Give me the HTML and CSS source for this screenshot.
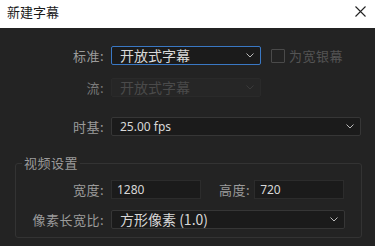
FILE: index.html
```html
<!DOCTYPE html>
<html lang="zh">
<head>
    <meta charset="UTF-8">
    <title>新建字幕</title>
    <link rel="stylesheet" href="styles.css">
</head>
<body>
    <div class="titlebar">
        <span class="title">新建字幕</span>
        <span class="close">
            <svg width="11" height="11" viewBox="0 0 11 11"><path d="M0.5 0.5 L10.5 10.5 M10.5 0.5 L0.5 10.5" stroke="#222" stroke-width="1.1" fill="none"/></svg>
        </span>
    </div>

    <div class="content">
        <div class="row row-std">
            <label class="lbl">标准:</label>
            <div class="select select-std focus">
                <span class="val big">开放式字幕</span>
                <svg class="arrow" width="8" height="5" viewBox="0 0 8 5"><path d="M0.5 0.5 L4 4 L7.5 0.5" stroke="#bbb" fill="none"/></svg>
            </div>
            <div class="check">
                <span class="box"></span>
                <span class="check-text">为宽银幕</span>
            </div>
        </div>

        <div class="row row-stream">
            <label class="lbl dim">流:</label>
            <div class="select select-std disabled">
                <span class="val big">开放式字幕</span>
                <svg class="arrow" width="8" height="5" viewBox="0 0 8 5"><path d="M0.5 0.5 L4 4 L7.5 0.5" stroke="#3a3a3a" fill="none"/></svg>
            </div>
        </div>

        <div class="row row-time">
            <label class="lbl">时基:</label>
            <div class="select select-wide">
                <span class="val">25.00 fps</span>
                <svg class="arrow" width="8" height="5" viewBox="0 0 8 5"><path d="M0.5 0.5 L4 4 L7.5 0.5" stroke="#bbb" fill="none"/></svg>
            </div>
        </div>

        <fieldset class="group">
            <legend>视频设置</legend>
            <div class="row row-size">
                <label class="lbl lbl-in">宽度:</label>
                <div class="input">1280</div>
                <label class="lbl lbl-h">高度:</label>
                <div class="input">720</div>
            </div>
            <div class="row row-par">
                <label class="lbl lbl-in">像素长宽比:</label>
                <div class="select select-par">
                    <span class="val big">方形像素 (1.0)</span>
                    <svg class="arrow" width="8" height="5" viewBox="0 0 8 5"><path d="M0.5 0.5 L4 4 L7.5 0.5" stroke="#bbb" fill="none"/></svg>
                </div>
            </div>
        </fieldset>
    </div>
</body>
</html>
```

FILE: styles.css
```css
body {
    margin: 0;
    background-color: #232323;
    font-family: "Noto Sans CJK SC", "Noto Sans", sans-serif;
    font-size: 13px;
    width: 375px;
    height: 246px;
    overflow: hidden;
}

.titlebar {
    height: 28px;
    background-color: #ffffff;
    display: flex;
    align-items: center;
    justify-content: space-between;
    padding: 0 9px 0 7px;
    box-sizing: border-box;
}

.title {
    color: #1a1a1a;
    font-size: 13px;
    line-height: 16px;
    margin-top: -4px;
}

.close {
    display: flex;
    margin-top: -5px;
}

.content {
    padding-top: 18px;
}

.row {
    display: flex;
    align-items: center;
}

.lbl {
    width: 104px;
    text-align: right;
    color: #9b9b9b;
    font-size: 13px;
    letter-spacing: 0.5px;
    margin-right: 7px;
    flex-shrink: 0;
}

.lbl.dim {
    color: #7a7a7a;
}

.select {
    height: 19px;
    box-sizing: border-box;
    background-color: #1b1b1b;
    border: 1px solid #363636;
    border-radius: 2px;
    display: flex;
    align-items: center;
    justify-content: space-between;
    padding: 0 6px 0 8px;
    color: #d8d8d8;
}

.select.focus {
    border-color: #3a78c4;
}

.select.disabled {
    background-color: #262626;
    border-color: #2a2a2a;
    color: #4a4a4a;
}

.val {
    font-family: "Noto Sans", "Noto Sans CJK SC", sans-serif;
    font-size: 12px;
    line-height: 17px;
}

.val.big {
    font-family: "Noto Sans CJK SC", sans-serif;
    font-size: 14px;
}

.select-std {
    width: 150px;
}

.select-wide {
    width: 250px;
}

.select-par {
    width: 234px;
}

.check {
    display: flex;
    align-items: center;
    margin-left: 10px;
}

.box {
    width: 12px;
    height: 12px;
    border: 1px solid #4a4a4a;
    border-radius: 1px;
    margin-right: 4px;
}

.check-text {
    color: #545454;
    font-size: 13px;
    letter-spacing: 0.5px;
}

.row-stream {
    margin-top: 13px;
}

.row-time {
    margin-top: 20px;
}

.group {
    margin: 20px 13px 0 15px;
    padding: 0 0 14px 0;
    border: 1px solid #333333;
    border-radius: 3px;
    height: 82px;
    box-sizing: border-box;
}

.group legend {
    color: #9b9b9b;
    font-size: 13px;
    letter-spacing: 0.5px;
    padding: 0 2px;
    margin-left: 6px;
    line-height: 14px;
}

.lbl-in {
    width: 88px;
}

.lbl-h {
    width: auto;
    margin-left: 18px;
    margin-right: 4px;
}

.row-size {
    margin-top: 10px;
}

.input {
    width: 90px;
    height: 19px;
    box-sizing: border-box;
    background-color: #1b1b1b;
    border: 1px solid #2c2c2c;
    color: #d8d8d8;
    font-family: "Noto Sans", sans-serif;
    font-size: 12px;
    line-height: 17px;
    padding-left: 5px;
}

.row-par {
    margin-top: 11px;
}
```
